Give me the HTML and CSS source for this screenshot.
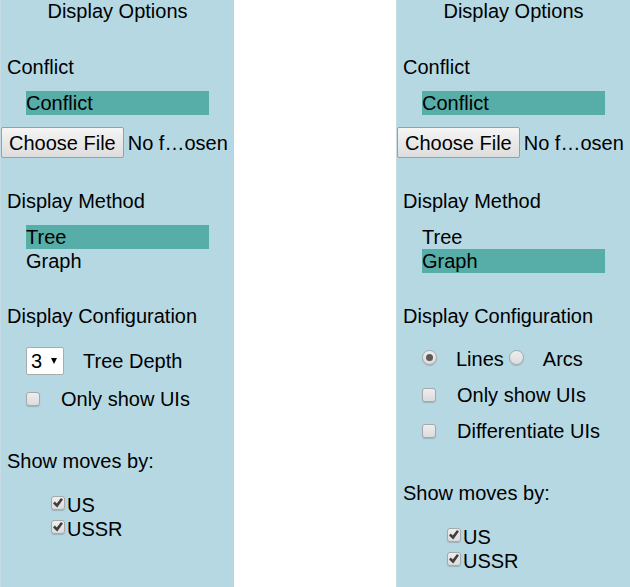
FILE: index.html
```html
<!DOCTYPE html>
<html lang="en">
<head>
  <meta charset="utf-8">
  <meta name="viewport" content="width=device-width, initial-scale=1">
  <title>Display Options</title>
  <link rel="stylesheet" href="styles.css">
</head>
<body>
  <main class="panels">
    <form class="panel">
      <h1 class="title">Display Options</h1>

      <section class="group">
        <h2 class="heading">Conflict</h2>
        <ul class="choices">
          <li class="choice selected">Conflict</li>
        </ul>
        <input class="file" type="file" aria-label="Conflict file">
      </section>

      <section class="group">
        <h2 class="heading">Display Method</h2>
        <ul class="choices">
          <li class="choice selected">Tree</li>
          <li class="choice">Graph</li>
        </ul>
      </section>

      <section class="group">
        <h2 class="heading">Display Configuration</h2>
        <div class="settings">
          <div class="setting">
            <span class="select-box">
              <select class="select" id="tree-depth">
                <option>1</option>
                <option>2</option>
                <option selected>3</option>
                <option>4</option>
              </select>
              <svg class="arrow" viewBox="0 0 6 6" aria-hidden="true"><path d="M0 0h6L3 6z"/></svg>
            </span>
            <label class="depth-label" for="tree-depth">Tree Depth</label>
          </div>
          <div class="setting">
            <input class="check" type="checkbox" id="tree-uis">
            <label class="check-label" for="tree-uis">Only show UIs</label>
          </div>
        </div>
      </section>

      <section class="moves">
        <h2 class="heading">Show moves by:</h2>
        <div class="players">
          <label class="player"><input class="check" type="checkbox" checked>US</label>
          <label class="player"><input class="check" type="checkbox" checked>USSR</label>
        </div>
      </section>
    </form>

    <form class="panel">
      <h1 class="title">Display Options</h1>

      <section class="group">
        <h2 class="heading">Conflict</h2>
        <ul class="choices">
          <li class="choice selected">Conflict</li>
        </ul>
        <input class="file" type="file" aria-label="Conflict file">
      </section>

      <section class="group">
        <h2 class="heading">Display Method</h2>
        <ul class="choices">
          <li class="choice">Tree</li>
          <li class="choice selected">Graph</li>
        </ul>
      </section>

      <section class="group">
        <h2 class="heading">Display Configuration</h2>
        <div class="settings">
          <div class="setting">
            <input class="radio" type="radio" name="edges" id="lines" checked>
            <label class="radio-label" for="lines">Lines</label>
            <input class="radio" type="radio" name="edges" id="arcs">
            <label class="radio-label" for="arcs">Arcs</label>
          </div>
          <div class="setting">
            <input class="check" type="checkbox" id="graph-uis">
            <label class="check-label" for="graph-uis">Only show UIs</label>
          </div>
          <div class="setting">
            <input class="check" type="checkbox" id="differentiate">
            <label class="check-label" for="differentiate">Differentiate UIs</label>
          </div>
        </div>
      </section>

      <section class="moves">
        <h2 class="heading">Show moves by:</h2>
        <div class="players">
          <label class="player"><input class="check" type="checkbox" checked>US</label>
          <label class="player"><input class="check" type="checkbox" checked>USSR</label>
        </div>
      </section>
    </form>
  </main>
</body>
</html>
```
FILE: styles.css
```css
* {
  box-sizing: border-box;
}

body {
  margin: 0;
  background: #fff;
  color: #000;
  font: 20px/24px "Liberation Sans", Arial, sans-serif;
}

.panels {
  display: flex;
  justify-content: space-between;
  min-height: 100vh;
}

.panel {
  flex: 0 0 234px;
  border-left: 1px solid #c8dce3;
  background: #b6d8e3;
}

.title,
.heading {
  margin: 0;
  font-size: 20px;
  font-weight: 400;
}

.title {
  margin-bottom: 33px;
  line-height: 22px;
  text-align: center;
}

.heading {
  padding-left: 6px;
}

.group {
  margin-bottom: 31px;
}

.choices {
  margin: 12px 25px 0;
  padding: 0;
  list-style: none;
}

.selected {
  background: #57ada7;
}

.file {
  display: block;
  width: 228px;
  margin-top: 12px;
  font: inherit;
}

.file::file-selector-button {
  height: 31px;
  margin: 0 4px 0 0;
  padding: 0 7px;
  border: 1px solid #9a9fa1;
  border-radius: 2px;
  background: linear-gradient(#f5f5f5, #dddddd);
  color: #000;
  font: inherit;
}

.settings {
  display: flex;
  flex-direction: column;
  gap: 12px;
  margin: 19px 0 38px 25px;
}

.setting,
.player {
  display: flex;
  align-items: center;
}

.select-box {
  position: relative;
}

.select {
  display: block;
  width: 38px;
  height: 28px;
  padding: 0 4px;
  appearance: none;
  border: 1px solid #a5adb0;
  border-radius: 2px;
  background: #fff;
  color: #000;
  font: inherit;
}

.arrow {
  position: absolute;
  top: 11px;
  right: 7px;
  width: 6px;
  height: 6px;
  pointer-events: none;
}

.depth-label,
.radio-label {
  margin-left: 19px;
}

.radio-label + .radio {
  margin-left: 5px;
}

.check-label {
  margin-left: 21px;
}

.check,
.radio {
  display: grid;
  place-content: center;
  flex: none;
  margin: 0;
  appearance: none;
  border: 1px solid #a3a9ac;
  background: linear-gradient(#eeeeee, #dcdcdc);
  box-shadow: 0 1px 1px #9cb5bd;
}

.check {
  width: 14px;
  height: 14px;
  border-radius: 3px;
}

.check:checked::before {
  content: "";
  width: 10px;
  height: 10px;
  background: #3f3f3f;
  clip-path: polygon(0 54%, 18% 36%, 38% 56%, 80% 0, 100% 16%, 42% 96%);
}

.radio {
  width: 15px;
  height: 15px;
  margin-bottom: 4px;
  border-radius: 50%;
}

.radio:checked::before {
  content: "";
  width: 7px;
  height: 7px;
  border-radius: 50%;
  background: #5b5b5b;
}

.players {
  margin: 20px 0 0 50px;
}

.player {
  gap: 2px;
}

.player .check {
  margin-bottom: 4px;
}
```
